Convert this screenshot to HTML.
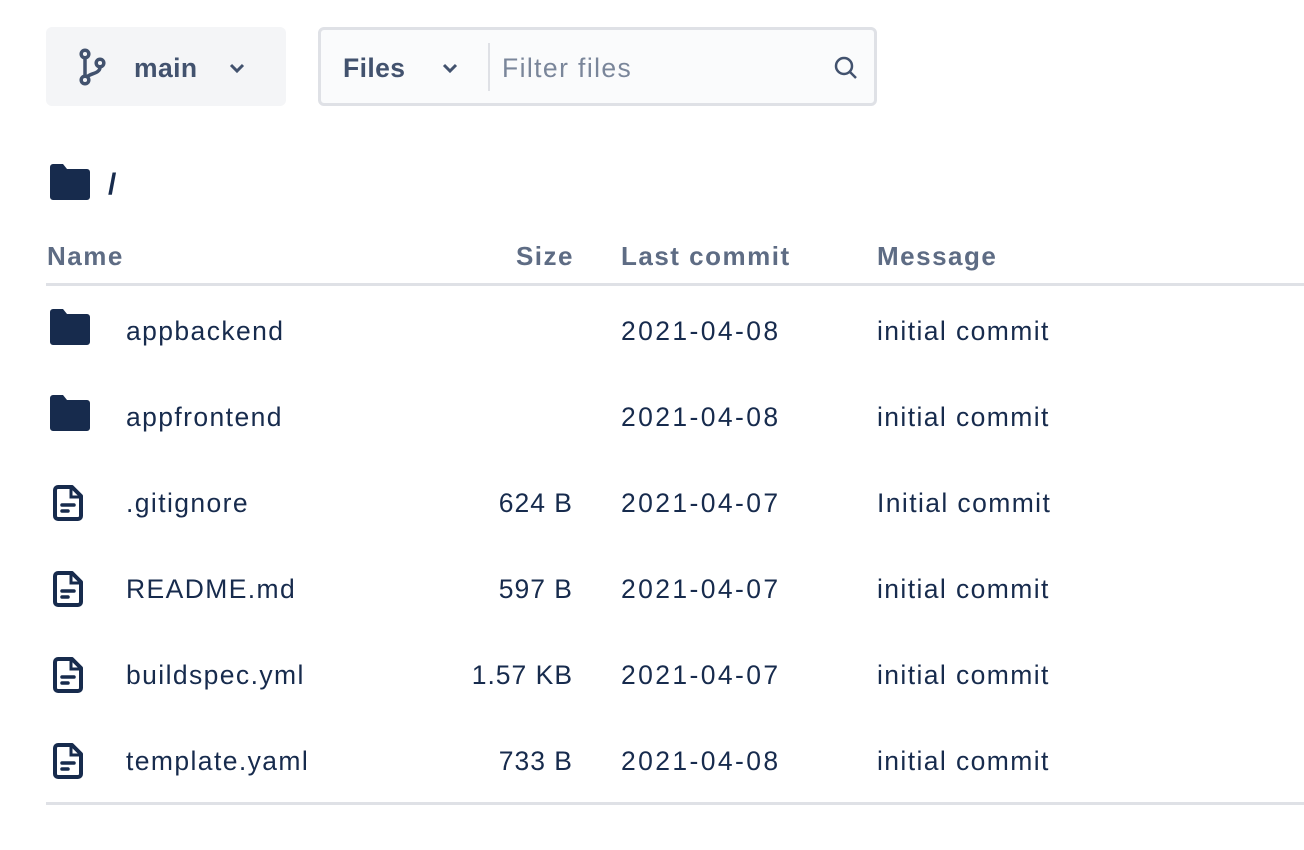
<!DOCTYPE html>
<html><head><style>
body{margin:0;width:1304px;height:850px;background:#fff;font-family:"Liberation Sans",sans-serif;color:#172B4D;position:relative;overflow:hidden}
.a{position:absolute}
.t{font-size:26.5px;white-space:nowrap;line-height:30px;letter-spacing:1.4px}
.d{letter-spacing:2.4px}
.h{font-size:26px;font-weight:bold;color:#5E6C84;line-height:30px;letter-spacing:1.5px;white-space:nowrap}
.r{text-align:right}
</style></head><body>
<div class="a" style="left:46px;top:27px;width:240px;height:79px;background:#F4F5F7;border-radius:6px"></div>
<svg class="a" style="left:78px;top:48px" width="30" height="38" viewBox="0 0 30 38" fill="none" stroke="#42526E" stroke-width="3.5"><circle cx="7" cy="6" r="3.8"/><circle cx="7" cy="32" r="3.8"/><circle cx="22" cy="15" r="3.8"/><path d="M7 10v18M22 19c0 7-10 6-13 10"/></svg>
<div class="a t" style="left:134px;top:53px;color:#42526E;font-weight:bold;letter-spacing:0.4px">main</div>
<svg class="a" style="left:229px;top:62px" width="16" height="12" viewBox="0 0 16 12"><path d="M2 3l6 6 6-6" stroke="#42526E" stroke-width="3" fill="none"/></svg>
<div class="a" style="left:318px;top:27px;width:553px;height:73px;background:#FAFBFC;border:3px solid #DFE1E6;border-radius:6px"></div>
<div class="a t" style="left:343px;top:53px;color:#42526E;font-weight:bold;letter-spacing:0.4px">Files</div>
<svg class="a" style="left:442px;top:62px" width="16" height="12" viewBox="0 0 16 12"><path d="M2 3l6 6 6-6" stroke="#42526E" stroke-width="3" fill="none"/></svg>
<div class="a" style="left:488px;top:43px;width:2px;height:48px;background:#DFE1E6"></div>
<div class="a t" style="left:502px;top:53px;color:#7A869A">Filter files</div>
<svg class="a" style="left:832px;top:54px" width="28" height="28" viewBox="0 0 28 28" fill="none" stroke="#42526E" stroke-width="2.5"><circle cx="12" cy="12" r="8"/><path d="M18 18l6 6"/></svg>
<svg class="a" style="left:50px;top:164px" width="40" height="36" viewBox="0 0 40 36"><path d="M0 3a3 3 0 0 1 3-3h10l4 5h20a3 3 0 0 1 3 3v25a3 3 0 0 1-3 3H3a3 3 0 0 1-3-3z" fill="#172B4D"/></svg>
<div class="a t" style="left:108px;top:170px;font-size:30px;font-weight:bold">/</div>
<div class="a h" style="left:47px;top:241px">Name</div>
<div class="a h r" style="left:400px;width:174px;top:241px">Size</div>
<div class="a h" style="left:621px;top:241px">Last commit</div>
<div class="a h" style="left:877px;top:241px">Message</div>
<div class="a" style="left:46px;top:283px;width:1258px;height:3px;background:#DFE1E6"></div>
<div class="a" style="left:46px;top:802px;width:1258px;height:3px;background:#DFE1E6"></div>
<div id="rows"></div>
<script>
const rows=[["d","appbackend","","2021-04-08","initial commit"],["d","appfrontend","","2021-04-08","initial commit"],["f",".gitignore","624 B","2021-04-07","Initial commit"],["f","README.md","597 B","2021-04-07","initial commit"],["f","buildspec.yml","1.57 KB","2021-04-07","initial commit"],["f","template.yaml","733 B","2021-04-08","initial commit"]];
let h="";rows.forEach((r,i)=>{const y=316+i*86;
if(r[0]=="d")h+=`<svg class="a" style="left:50px;top:${y-7}px" width="40" height="36" viewBox="0 0 40 36"><path d="M0 3a3 3 0 0 1 3-3h10l4 5h20a3 3 0 0 1 3 3v25a3 3 0 0 1-3 3H3a3 3 0 0 1-3-3z" fill="#172B4D"/></svg>`;
else h+=`<svg class="a" style="left:53px;top:${y-3}px" width="32" height="36" viewBox="0 0 32 36" fill="none" stroke="#172B4D" stroke-width="4"><path d="M5 2h14l9 9v20a3 3 0 0 1-3 3H5a3 3 0 0 1-3-3V5a3 3 0 0 1 3-3z" stroke-linejoin="round"/><path d="M18 2v10h10" stroke-width="3"/><path d="M9 20h12M9 26h6" stroke-width="3.5" stroke-linecap="round"/></svg>`;
h+=`<div class="a t r" style="left:126px;top:${y}px;text-align:left">${r[1]}</div><div class="a t r" style="left:400px;width:173px;top:${y}px;letter-spacing:1px">${r[2]}</div><div class="a t d" style="left:621px;top:${y}px">${r[3]}</div><div class="a t" style="left:877px;top:${y}px">${r[4]}</div>`;});
document.getElementById("rows").innerHTML=h;
</script>
</body></html>
